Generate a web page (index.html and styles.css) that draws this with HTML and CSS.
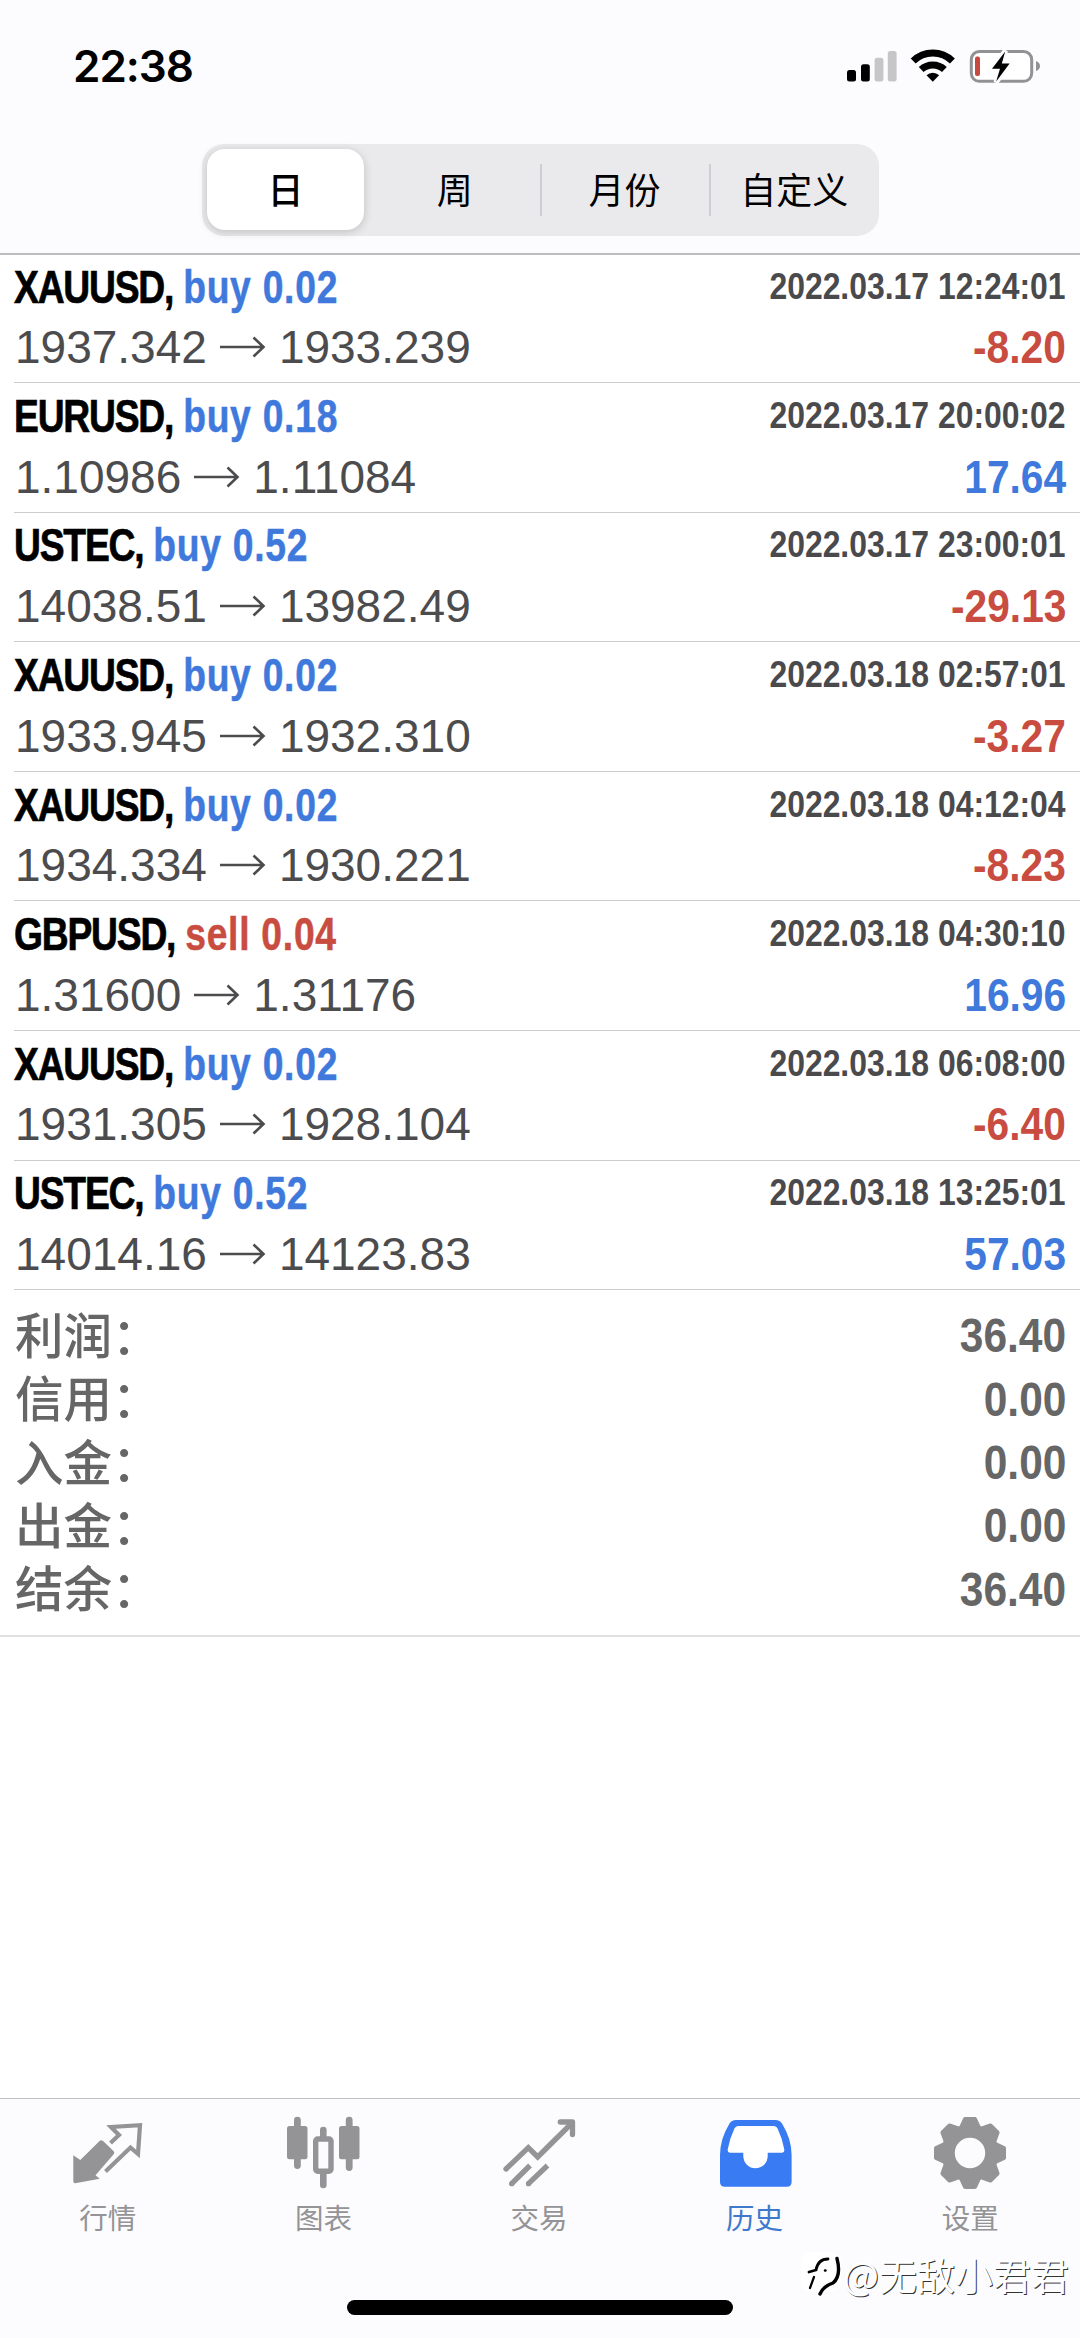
FILE: index.html
```html
<!DOCTYPE html>
<html lang="zh-CN">
<head>
<meta charset="utf-8">
<title>历史</title>
<link rel="stylesheet" href="styles.css">
</head>
<body>
<div class="screen">
  <header class="top">
    <div class="status">
      <span class="clock">22:38</span>
      <svg class="status-icons" width="210" height="42" viewBox="0 0 210 42">
        <rect x="7" y="25" width="9" height="11.5" rx="2.5"/>
        <rect x="21" y="19.3" width="8.8" height="17.2" rx="2.5"/>
        <rect x="34.6" y="12.7" width="8.8" height="23.8" rx="2.5" fill="#c6c5c8"/>
        <rect x="47.8" y="6" width="8.8" height="30.5" rx="2.5" fill="#c6c5c8"/>
        <g fill="none" stroke="#000" stroke-width="7">
          <path d="M73.200 16a28 28 0 0 1 39.200 0"/>
          <path d="M81.200 24.500a17 17 0 0 1 23.200 0"/>
        </g>
        <path d="M92.800 36.800l-6.300-6.600a9 9 0 0 1 12.600 0z"/>
        <rect x="131.3" y="6.5" width="60.4" height="29.8" rx="8" fill="#fff" stroke="#929194" stroke-width="3"/>
        <path d="M196 16q4 1.500 4 5t-4 5z" fill="#929194"/>
        <rect x="135" y="11.500" width="5" height="19.500" rx="2" fill="#c9493f"/>
        <path d="M165.500 5.500L151.500 24h8l-3.500 13.500 14-19h-8z" stroke="#fcfbfe" stroke-width="5"/>
        <path d="M165.200 6.500L152 23.700h8L156.200 36.500 169.600 18.500h-7.800z"/>
      </svg>
    </div>
    <nav class="segments">
      <span class="segment selected">日</span>
      <span class="segment">周</span>
      <span class="segment divided">月份</span>
      <span class="segment divided">自定义</span>
    </nav>
  </header>

  <main class="history">
    <article class="deal">
      <div class="line"><h2 class="title"><span class="symbol">XAUUSD,</span> <span class="op buy">buy 0.02</span></h2><time class="time">2022.03.17 12:24:01</time></div>
      <div class="line"><p class="prices">1937.342 <svg class="arrow" viewBox="0 0 46 22"><path d="M0 11h43M33.500 1.500L43.500 11l-10 9.500"/></svg> 1933.239</p><b class="amount loss">-8.20</b></div>
    </article>
    <article class="deal">
      <div class="line"><h2 class="title"><span class="symbol">EURUSD,</span> <span class="op buy">buy 0.18</span></h2><time class="time">2022.03.17 20:00:02</time></div>
      <div class="line"><p class="prices">1.10986 <svg class="arrow" viewBox="0 0 46 22"><path d="M0 11h43M33.500 1.500L43.500 11l-10 9.500"/></svg> 1.11084</p><b class="amount gain">17.64</b></div>
    </article>
    <article class="deal">
      <div class="line"><h2 class="title"><span class="symbol">USTEC,</span> <span class="op buy">buy 0.52</span></h2><time class="time">2022.03.17 23:00:01</time></div>
      <div class="line"><p class="prices">14038.51 <svg class="arrow" viewBox="0 0 46 22"><path d="M0 11h43M33.500 1.500L43.500 11l-10 9.500"/></svg> 13982.49</p><b class="amount loss">-29.13</b></div>
    </article>
    <article class="deal">
      <div class="line"><h2 class="title"><span class="symbol">XAUUSD,</span> <span class="op buy">buy 0.02</span></h2><time class="time">2022.03.18 02:57:01</time></div>
      <div class="line"><p class="prices">1933.945 <svg class="arrow" viewBox="0 0 46 22"><path d="M0 11h43M33.500 1.500L43.500 11l-10 9.500"/></svg> 1932.310</p><b class="amount loss">-3.27</b></div>
    </article>
    <article class="deal">
      <div class="line"><h2 class="title"><span class="symbol">XAUUSD,</span> <span class="op buy">buy 0.02</span></h2><time class="time">2022.03.18 04:12:04</time></div>
      <div class="line"><p class="prices">1934.334 <svg class="arrow" viewBox="0 0 46 22"><path d="M0 11h43M33.500 1.500L43.500 11l-10 9.500"/></svg> 1930.221</p><b class="amount loss">-8.23</b></div>
    </article>
    <article class="deal">
      <div class="line"><h2 class="title"><span class="symbol">GBPUSD,</span> <span class="op sell">sell 0.04</span></h2><time class="time">2022.03.18 04:30:10</time></div>
      <div class="line"><p class="prices">1.31600 <svg class="arrow" viewBox="0 0 46 22"><path d="M0 11h43M33.500 1.500L43.500 11l-10 9.500"/></svg> 1.31176</p><b class="amount gain">16.96</b></div>
    </article>
    <article class="deal">
      <div class="line"><h2 class="title"><span class="symbol">XAUUSD,</span> <span class="op buy">buy 0.02</span></h2><time class="time">2022.03.18 06:08:00</time></div>
      <div class="line"><p class="prices">1931.305 <svg class="arrow" viewBox="0 0 46 22"><path d="M0 11h43M33.500 1.500L43.500 11l-10 9.500"/></svg> 1928.104</p><b class="amount loss">-6.40</b></div>
    </article>
    <article class="deal">
      <div class="line"><h2 class="title"><span class="symbol">USTEC,</span> <span class="op buy">buy 0.52</span></h2><time class="time">2022.03.18 13:25:01</time></div>
      <div class="line"><p class="prices">14014.16 <svg class="arrow" viewBox="0 0 46 22"><path d="M0 11h43M33.500 1.500L43.500 11l-10 9.500"/></svg> 14123.83</p><b class="amount gain">57.03</b></div>
    </article>
    <section class="summary">
      <div class="total"><span class="label">利润：</span><b class="value">36.40</b></div>
      <div class="total"><span class="label">信用：</span><b class="value">0.00</b></div>
      <div class="total"><span class="label">入金：</span><b class="value">0.00</b></div>
      <div class="total"><span class="label">出金：</span><b class="value">0.00</b></div>
      <div class="total"><span class="label">结余：</span><b class="value">36.40</b></div>
    </section>
  </main>

  <footer class="bottom">
    <nav class="tabs">
      <a class="tab">
        <svg class="icon" viewBox="0 0 80 80">
          <path d="M5.300 43.300L12.300 48 31.300 29.300q2-2 4 0L45.500 39q1.600 1.600.2 3.200L27.500 63.300l4.200 3.400-24.400 4.500q-2 .2-2-2z" fill="currentColor"/>
          <path d="M42.500 31l8.500-8-8-8 29-1.800-2 28.800-7.500-6.500-25 24" fill="none" stroke="currentColor" stroke-width="4.200"/>
        </svg>
        <span class="caption">行情</span>
      </a>
      <a class="tab">
        <svg class="icon" viewBox="0 0 80 80" fill="currentColor">
          <rect x="11" y="4.700" width="6.800" height="52.300" rx="3.400"/>
          <rect x="4" y="14" width="20.500" height="33.300" rx="2.500"/>
          <rect x="62.800" y="4.700" width="6.800" height="54.300" rx="3.400"/>
          <rect x="56" y="14" width="20.500" height="33.300" rx="2.500"/>
          <path d="M37 28V18a3.300 3.300 0 0 1 6.600 0v10zM37 60v13a3.300 3.300 0 0 0 6.600 0V60z"/>
          <rect x="32.700" y="27" width="15.300" height="32.300" rx="2" fill="none" stroke="currentColor" stroke-width="5.400"/>
        </svg>
        <span class="caption">图表</span>
      </a>
      <a class="tab">
        <svg class="icon" viewBox="0 0 80 80" fill="none" stroke="currentColor" stroke-width="5.300">
          <path d="M7 57l22.300-21.300 9.400 9.300L73 11" stroke-linecap="round"/>
          <path d="M61.300 10H73.500v12.500" stroke-linecap="round" stroke-linejoin="round"/>
          <path d="M12.700 71.700L31 53.500M29.500 71.700L48.500 53.500"/>
          <path d="M12.700 71.700h.01M29.500 71.700h.01" stroke-linecap="round"/>
        </svg>
        <span class="caption">交易</span>
      </a>
      <a class="tab active">
        <svg class="icon" viewBox="0 0 80 80">
          <path d="M21 8H60.500Q65 8 67 11.500 76.600 27 76.600 43V70q0 4.700-4.700 4.700H9.700Q5 74.700 5 70V43Q5 27 14.500 11.500 16.500 8 21 8z" fill="currentColor"/>
          <path d="M23.500 14H58.500Q61.500 14 62.800 17 67.500 27 69.300 37.500q.4 3.200-2.300 3.200H52.700V44a12.200 12.200 0 0 1-24.400 0V40.700H15q-2.700 0-2.300-3.200Q14.500 27 19.200 17 20.500 14 23.500 14z" fill="#fff"/>
        </svg>
        <span class="caption">历史</span>
      </a>
      <a class="tab">
        <svg class="icon" viewBox="-40 -41 80 80" fill="currentColor" stroke="currentColor" stroke-width="4" stroke-linejoin="round">
          <circle r="22" fill="none" stroke-width="13.600"/>
          <path id="tooth" d="M-8.500-26.500L-5-34h10L8.500-26.500z"/>
          <use href="#tooth" transform="rotate(45)"/>
          <use href="#tooth" transform="rotate(90)"/>
          <use href="#tooth" transform="rotate(135)"/>
          <use href="#tooth" transform="rotate(180)"/>
          <use href="#tooth" transform="rotate(225)"/>
          <use href="#tooth" transform="rotate(270)"/>
          <use href="#tooth" transform="rotate(315)"/>
        </svg>
        <span class="caption">设置</span>
      </a>
    </nav>
    <div class="home-indicator"></div>
  </footer>

  <div class="watermark">
    <svg class="mark" viewBox="0 0 42 50">
      <rect x="0" y="3" width="40" height="40" rx="10" fill="#fff"/>
      <g fill="none" stroke="#000" stroke-linecap="round">
        <path d="M8 23l7-2q2-11 12-11" stroke-width="2.800"/>
        <path d="M13 28L9 39" stroke-width="2.200"/>
        <path d="M36 9.500Q40.500 27 32 34 22 37.500 19 45" stroke-width="3.400"/>
        <path d="M24 21.500h.5" stroke-width="2.400"/>
      </g>
    </svg>
    <span>@无敌小君君</span>
  </div>
</div>
</body>
</html>
```
FILE: styles.css
```css
* {
  box-sizing: border-box;
}

body {
  margin: 0;
  background: #fff;
  font-family: "Liberation Sans", "Noto Sans CJK SC", sans-serif;
}

.screen {
  position: relative;
  display: flex;
  flex-direction: column;
  width: 1080px;
  height: 2338px;
  overflow: hidden;
  background: #fff;
}

/* Status bar and period switch */
.top {
  flex: none;
  height: 255px;
  padding-top: 45px;
  background: #fcfbfe;
  border-bottom: 2px solid #bdbcbf;
}

.status {
  display: flex;
  justify-content: space-between;
  align-items: center;
  height: 42px;
  padding: 0 30px 0 73px;
}

.clock {
  font: 600 44px/42px Inter, sans-serif;
  letter-spacing: -1px;
}

.status-icons {
  display: block;
}

.segments {
  display: flex;
  width: 677px;
  height: 92px;
  margin: 57px 0 0 202px;
  padding: 5px 0 5px 5px;
  border-radius: 22px;
  background: #eae9ec;
}

.segment {
  display: flex;
  flex: 1;
  align-items: center;
  justify-content: center;
  padding: 0 0 4px;
  font: 400 36px/1 "Noto Sans CJK SC", sans-serif;
  color: #000;
}

.selected {
  flex: 0 0 157px;
  margin-right: 6px;
  height: 81px;
  padding-bottom: 3px;
  border-radius: 18px;
  background: #fff;
  box-shadow: 0 2px 10px rgba(0, 0, 0, 0.18);
  font-weight: 500;
}

.divided {
  background: linear-gradient(#cfced2, #cfced2) left center / 2px 52px no-repeat;
}

/* Deals */
.history {
  flex: 1;
}

.deal {
  height: 129.57px;
  margin-left: 14px;
  padding: 2.300px 14px 0 0;
  border-bottom: 1.500px solid #cccccf;
}

.deal:first-child {
  height: 128.200px;
  padding-top: 1.300px;
}

.line {
  display: flex;
  justify-content: space-between;
  align-items: center;
  height: 60.700px;
  line-height: 60px;
  white-space: nowrap;
}

.title {
  margin: 0;
  font-size: 46px;
  font-weight: 700;
  transform: scaleX(0.81);
  transform-origin: left;
}

.symbol {
  color: #000;
  letter-spacing: -1.500px;
  -webkit-text-stroke: 0.700px #000;
}

.op {
  margin-left: -0.500px;
  letter-spacing: 0.900px;
  -webkit-text-stroke: 0.500px currentColor;
}

.buy,
.gain {
  color: #3f79dc;
}

.sell,
.loss {
  color: #c94c41;
}

.time {
  color: #4a4a4d;
  font-size: 37px;
  font-weight: 700;
  transform: scaleX(0.862);
  transform-origin: right;
}

.prices {
  display: flex;
  align-items: center;
  gap: 13px;
  margin: 0;
  padding-left: 1px;
  color: #4c4c4e;
  font-size: 46px;
}

.arrow {
  width: 46px;
  height: 22px;
  fill: none;
  stroke: currentColor;
  stroke-width: 2.600px;
}

.amount {
  font-size: 46px;
  transform: scaleX(0.885);
  transform-origin: right;
}

/* Totals */
.summary {
  padding: 14px 14px;
  border-bottom: 2px solid #e1e1e3;
}

.total {
  display: flex;
  justify-content: space-between;
  align-items: center;
  height: 63.400px;
  line-height: 60px;
  color: #666;
}

.label {
  padding: 0 0 6px 1px;
  font: 500 48.500px/50px "Noto Sans CJK SC", sans-serif;
}

.value {
  padding-top: 1px;
  font-size: 48px;
  transform: scaleX(0.885);
  transform-origin: right;
}

/* Tab bar */
.bottom {
  flex: none;
  display: flex;
  flex-direction: column;
  align-items: center;
  justify-content: space-between;
  height: 240px;
  padding-bottom: 23px;
  background: #fcfbfe;
  border-top: 1.500px solid #bfbec1;
}

.tabs {
  display: flex;
  width: 100%;
  padding: 13px 2px 0 0;
}

.tab {
  display: flex;
  flex: 1;
  flex-direction: column;
  align-items: center;
  gap: 8px;
  color: #949396;
}

.active {
  color: #397bf3;
}

.active .caption {
  color: #3f79cc;
}

.icon {
  width: 80px;
  height: 80px;
}

.caption {
  font: 400 28.500px/34px "Noto Sans CJK SC", sans-serif;
}

.home-indicator {
  width: 386px;
  height: 15px;
  border-radius: 8px;
  background: #000;
}

.watermark {
  position: absolute;
  left: 801px;
  top: 2251px;
  display: flex;
  align-items: center;
  height: 50px;
  padding-bottom: 4px;
  color: #fff;
  font: 400 38px/44px "Noto Sans CJK SC", sans-serif;
  text-shadow: 1px 1px 0 #333;
}

.mark {
  width: 42px;
  height: 50px;
}
```
